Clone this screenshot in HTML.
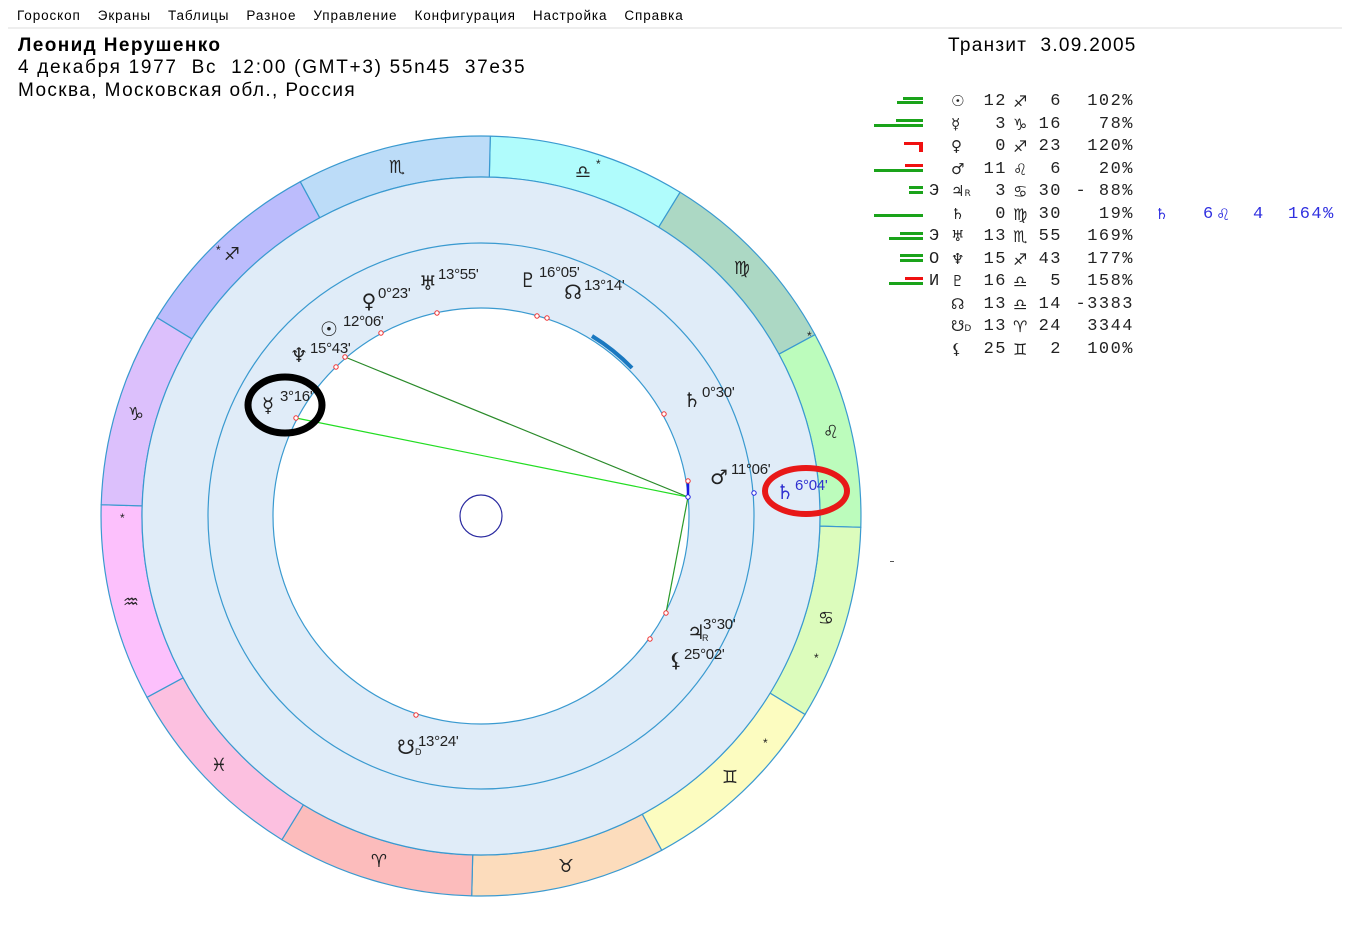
<!DOCTYPE html>
<html><head><meta charset="utf-8">
<style>
body{margin:0;width:1350px;height:925px;background:#fff;position:relative;overflow:hidden;font-family:"Liberation Sans","DejaVu Sans",sans-serif;}
.menu{position:absolute;top:8px;left:17px;font-size:13.5px;color:#000;letter-spacing:0.9px}
.menu span{margin-right:17px}
.hr{position:absolute;top:27px;left:8px;width:1334px;height:2px;background:#eeeeee}
.h{position:absolute;left:18px;font-size:19px;color:#000;white-space:pre;letter-spacing:1.4px}
.row{position:absolute;left:0;width:1350px;height:22px;font-family:"Liberation Mono","DejaVu Sans Mono",monospace;font-size:17px;color:#222;white-space:pre}
.row span{position:absolute;top:0}
.pl{left:951px;font-family:"DejaVu Sans",sans-serif;font-size:15px}
.dg{right:343px;letter-spacing:1.5px}
.sg{left:1013px;font-family:"DejaVu Sans",sans-serif;font-size:16px}
.mn{right:288px;letter-spacing:1.5px}
.pc{right:216px;letter-spacing:1.5px}
.ex{position:absolute;left:929px;font-family:"Liberation Mono",monospace;font-size:17px;color:#222}
.b{position:absolute;height:3px;background:#1aa31a}
.r{background:#f01010}
</style></head><body>
<div class="menu"><span>Гороскоп</span><span>Экраны</span><span>Таблицы</span><span>Разное</span><span>Управление</span><span>Конфигурация</span><span>Настройка</span><span>Справка</span></div>
<div class="hr"></div>
<div class="h" style="top:35px;font-weight:bold;letter-spacing:1.4px">Леонид Нерушенко</div>
<div class="h" style="top:57px;letter-spacing:1.7px">4 декабря 1977  Вс  12:00 (GMT+3) 55n45  37e35</div>
<div class="h" style="top:80px">Москва, Московская обл., Россия</div>
<div class="h" style="top:35px;left:948px;letter-spacing:1.3px">Транзит  3.09.2005</div>

<!-- bars -->
<div class="b" style="left:903px;top:97px;width:20px"></div><div class="b" style="left:897px;top:101px;width:26px"></div>
<div class="b" style="left:896px;top:119px;width:27px"></div><div class="b" style="left:874px;top:124px;width:49px"></div>
<div class="b r" style="left:904px;top:142px;width:19px"></div><div class="b r" style="left:919px;top:145px;width:4px;height:7px"></div>
<div class="b r" style="left:905px;top:164px;width:18px"></div><div class="b" style="left:874px;top:169px;width:49px"></div>
<div class="b" style="left:909px;top:186px;width:14px"></div><div class="b" style="left:909px;top:191px;width:14px"></div>
<div class="b" style="left:874px;top:214px;width:49px"></div>
<div class="b" style="left:900px;top:232px;width:23px"></div><div class="b" style="left:889px;top:237px;width:34px"></div>
<div class="b" style="left:900px;top:254px;width:23px"></div><div class="b" style="left:900px;top:259px;width:23px"></div>
<div class="b r" style="left:905px;top:277px;width:18px"></div><div class="b" style="left:889px;top:282px;width:34px"></div>
<div class="ex" style="top:182px">Э</div>
<div class="ex" style="top:227px">Э</div>
<div class="ex" style="top:250px">О</div>
<div class="ex" style="top:272px">И</div>

<div class="row" style="top:92px"><span class="pl">☉</span><span class="dg">12</span><span class="sg">♐</span><span class="mn">6</span><span class="pc">102%</span></div>
<div class="row" style="top:114.5px"><span class="pl">☿</span><span class="dg">3</span><span class="sg">♑</span><span class="mn">16</span><span class="pc">78%</span></div>
<div class="row" style="top:137px"><span class="pl">♀</span><span class="dg">0</span><span class="sg">♐</span><span class="mn">23</span><span class="pc">120%</span></div>
<div class="row" style="top:159.5px"><span class="pl">♂</span><span class="dg">11</span><span class="sg">♌</span><span class="mn">6</span><span class="pc">20%</span></div>
<div class="row" style="top:182px"><span class="pl">♃<small style="font-size:9px">R</small></span><span class="dg">3</span><span class="sg">♋</span><span class="mn">30</span><span class="pc">- 88%</span></div>
<div class="row" style="top:204.5px"><span class="pl">♄</span><span class="dg">0</span><span class="sg">♍</span><span class="mn">30</span><span class="pc">19%</span></div>
<div class="row" style="top:227px"><span class="pl">♅</span><span class="dg">13</span><span class="sg">♏</span><span class="mn">55</span><span class="pc">169%</span></div>
<div class="row" style="top:249.5px"><span class="pl">♆</span><span class="dg">15</span><span class="sg">♐</span><span class="mn">43</span><span class="pc">177%</span></div>
<div class="row" style="top:272px"><span class="pl">♇</span><span class="dg">16</span><span class="sg">♎</span><span class="mn">5</span><span class="pc">158%</span></div>
<div class="row" style="top:294.5px"><span class="pl">☊</span><span class="dg">13</span><span class="sg">♎</span><span class="mn">14</span><span class="pc">-3383</span></div>
<div class="row" style="top:317px"><span class="pl">☋<small style="font-size:9px">D</small></span><span class="dg">13</span><span class="sg">♈</span><span class="mn">24</span><span class="pc">3344</span></div>
<div class="row" style="top:339.5px"><span class="pl">⚸</span><span class="dg">25</span><span class="sg">♊</span><span class="mn">2</span><span class="pc">100%</span></div>
<div class="row" style="top:204.5px;color:#3030e0"><span style="left:1155px;font-family:'DejaVu Sans';font-size:15px">♄</span><span style="left:1203px">6</span><span style="left:1216px;font-family:'DejaVu Sans';font-size:16px">♌</span><span style="left:1253px">4</span><span style="left:1288px;letter-spacing:1.5px">164%</span></div>
<div style="position:absolute;left:890px;top:561px;width:4px;height:1px;background:#555"></div>

<svg width="1350" height="925" style="position:absolute;left:0;top:0" id="sv">
<g id="sect"></g>
<circle cx="481" cy="516" r="339" fill="#e0ecf8" stroke="#3a9ad0" stroke-width="1.2"/>
<circle cx="481" cy="516" r="273" fill="none" stroke="#3a9ad0" stroke-width="1.2"/>
<circle cx="481" cy="516" r="208" fill="#fff" stroke="#3a9ad0" stroke-width="1.2"/>
<path d="M592,336 A208,208 0 0 1 632,368" stroke="#1a78c0" stroke-width="4" fill="none"/>
<circle cx="481" cy="516" r="21" fill="none" stroke="#2a2aa0" stroke-width="1.2"/>
<line x1="345" y1="357" x2="688" y2="497" stroke="#2a8a2a" stroke-width="1.2"/>
<line x1="296" y1="418" x2="688" y2="497" stroke="#22dd22" stroke-width="1.2"/>
<line x1="688" y1="497" x2="666" y2="613" stroke="#2a9a2a" stroke-width="1.2"/>
<line x1="688" y1="481" x2="688" y2="497" stroke="#1a1ae0" stroke-width="2.5"/>
<g fill="#fff" stroke="#f03030" stroke-width="1">
<circle cx="345" cy="357" r="2.2"/><circle cx="336" cy="367" r="2.2"/><circle cx="296" cy="418" r="2.2"/><circle cx="381" cy="333" r="2.2"/><circle cx="437" cy="313" r="2.2"/><circle cx="537" cy="316" r="2.2"/><circle cx="547" cy="318" r="2.2"/><circle cx="664" cy="414" r="2.2"/><circle cx="688" cy="481" r="2.2"/><circle cx="666" cy="613" r="2.2"/><circle cx="650" cy="639" r="2.2"/><circle cx="416" cy="715" r="2.2"/>
</g>
<g fill="#fff" stroke="#2020e0" stroke-width="1"><circle cx="688" cy="497" r="2.2"/><circle cx="754" cy="493" r="2.2"/></g>

<g font-family="DejaVu Sans,sans-serif" font-size="18" fill="#222" text-anchor="middle">
<text x="397" y="173">♏</text><text x="583" y="178">♎</text><text x="742" y="274">♍</text><text x="831" y="438">♌</text>
<text x="826" y="624">♋</text><text x="730" y="783">♊</text><text x="566" y="872">♉</text><text x="379" y="867">♈</text>
<text x="219" y="771">♓</text><text x="131" y="608">♒</text><text x="136" y="420">♑</text><text x="232" y="260">♐</text>
</g>
<g font-family="Liberation Sans,sans-serif" font-size="12" fill="#222">
<text x="596" y="168">*</text><text x="216" y="254">*</text><text x="807" y="340">*</text><text x="120" y="522">*</text><text x="814" y="662">*</text><text x="763" y="747">*</text>
</g>
<g font-family="DejaVu Sans,sans-serif" font-size="20" fill="#222" text-anchor="middle">
<text x="428" y="290">♅</text><text x="369" y="308">♀</text><text x="329" y="336">☉</text><text x="299" y="362">♆</text>
<text x="268" y="412">☿</text><text x="528" y="287">♇</text><text x="573" y="299">☊</text><text x="692" y="407">♄</text>
<text x="719" y="484">♂</text><text x="696" y="639">♃</text><text x="676" y="667">⚸</text><text x="406" y="754">☋</text>
<text x="785" y="499" fill="#3030d0">♄</text>
</g>
<g font-family="Liberation Sans,sans-serif" font-size="15" fill="#222" letter-spacing="-0.3">
<text x="438" y="279">13°55'</text><text x="378" y="298">0°23'</text><text x="343" y="326">12°06'</text><text x="310" y="353">15°43'</text>
<text x="280" y="401">3°16'</text><text x="539" y="277">16°05'</text><text x="584" y="290">13°14'</text><text x="702" y="397">0°30'</text>
<text x="731" y="474">11°06'</text><text x="703" y="629">3°30'</text><text x="684" y="659">25°02'</text><text x="418" y="746">13°24'</text>
<text x="795" y="490" fill="#3030d0">6°04'</text>
<text x="702" y="641" font-size="9">R</text><text x="415" y="755" font-size="9">D</text>
</g>
<ellipse cx="285" cy="405" rx="37" ry="28" fill="none" stroke="#000" stroke-width="7"/>
<ellipse cx="806" cy="491" rx="41" ry="23" fill="none" stroke="#e81818" stroke-width="6"/>
</svg>
<script>
(function(){
var cx=481,cy=516,R=380,r=339;
var b=[88.6,58.4,28.5,-1.7,-31.5,-61.6,-91.4,-121.6,-151.5,-181.7,-211.5,-241.6,-271.4];
var c=["#b0fcfc","#acd8c4","#bcfcbc","#dcfcbc","#fcfcc0","#fcdcbc","#fcbcbc","#fcc0e0","#fcc0fc","#dcc0fc","#bcbcfc","#bcdcf8"];
var g=document.getElementById("sect"),h="";
function p(a,rad){a=a*Math.PI/180;return (cx+rad*Math.cos(a)).toFixed(1)+","+(cy-rad*Math.sin(a)).toFixed(1);}
for(var i=0;i<12;i++){var a1=b[i],a2=b[i+1];
h+='<path d="M'+p(a1,R)+' A'+R+','+R+' 0 0 1 '+p(a2,R)+' L'+p(a2,r)+' A'+r+','+r+' 0 0 0 '+p(a1,r)+' Z" fill="'+c[i]+'" stroke="#3a9ad0" stroke-width="1.2"/>';}
g.innerHTML=h;
})();
</script>
</body></html>
